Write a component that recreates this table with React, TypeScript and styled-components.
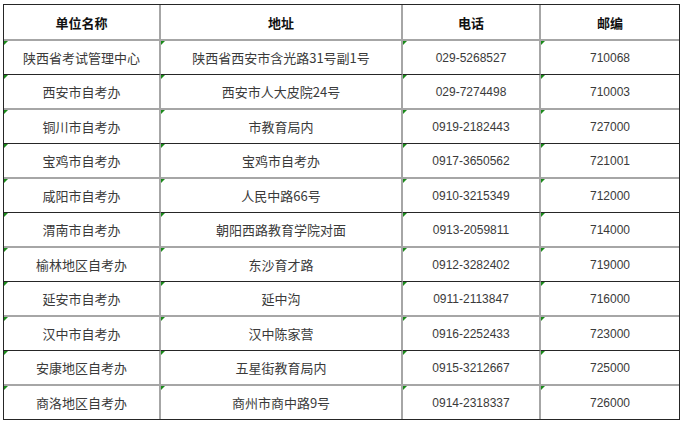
import React from "react";
import styled, { createGlobalStyle } from "styled-components";

interface Office {
  readonly name: string;
  readonly address: string;
  readonly phone: string;
  readonly zip: string;
}

const offices: Office[] = [
  { name: "陕西省考试管理中心", address: "陕西省西安市含光路31号副1号", phone: "029-5268527", zip: "710068" },
  { name: "西安市自考办", address: "西安市人大皮院24号", phone: "029-7274498", zip: "710003" },
  { name: "铜川市自考办", address: "市教育局内", phone: "0919-2182443", zip: "727000" },
  { name: "宝鸡市自考办", address: "宝鸡市自考办", phone: "0917-3650562", zip: "721001" },
  { name: "咸阳市自考办", address: "人民中路66号", phone: "0910-3215349", zip: "712000" },
  { name: "渭南市自考办", address: "朝阳西路教育学院对面", phone: "0913-2059811", zip: "714000" },
  { name: "榆林地区自考办", address: "东沙育才路", phone: "0912-3282402", zip: "719000" },
  { name: "延安市自考办", address: "延中沟", phone: "0911-2113847", zip: "716000" },
  { name: "汉中市自考办", address: "汉中陈家营", phone: "0916-2252433", zip: "723000" },
  { name: "安康地区自考办", address: "五星街教育局内", phone: "0915-3212667", zip: "725000" },
  { name: "商洛地区自考办", address: "商州市商中路9号", phone: "0914-2318337", zip: "726000" },
];

const GlobalStyle = createGlobalStyle`
  html, body {
    margin: 0;
    padding: 0;
    background: #fff;
  }
  body {
    font-family: "Noto Sans CJK SC", "Liberation Sans", sans-serif;
  }
`;

const Page = styled.div`
  padding: 4px 0 0 3px;
`;

const Table = styled.table`
  border-collapse: separate;
  border-spacing: 0;
  border: 1px solid #262626;
  table-layout: fixed;
`;

const HeadCell = styled.th<{ $w: number }>`
  width: ${(p) => p.$w}px;
  height: 34px;
  padding: 0;
  border-bottom: 2px solid #a6a6a6;
  border-right: 2px solid #a6a6a6;
  font-family: "Noto Sans CJK SC", sans-serif;
  font-size: 13px;
  font-weight: 700;
  color: #111;
  text-align: center;
  vertical-align: middle;

  &:last-child {
    border-right: none;
  }
`;

const Row = styled.tr<{ $dark: boolean; $last: boolean }>`
  td {
    height: 33px;
    border-bottom: ${(p) =>
      p.$last ? "none" : p.$dark ? "1px solid #262626" : "2px solid #a6a6a6"};
  }
`;

const Cell = styled.td<{ $num?: boolean }>`
  position: relative;
  padding: 0;
  border-right: 2px solid #a6a6a6;
  font-family: ${(p) =>
    p.$num
      ? '"Liberation Sans", "Noto Sans CJK SC", sans-serif'
      : '"Noto Sans CJK SC", sans-serif'};
  font-size: ${(p) => (p.$num ? 12 : 13)}px;
  color: #3a3a3a;
  text-align: center;
  vertical-align: middle;
  white-space: nowrap;

  &:last-child {
    border-right: none;
  }

  &::before {
    content: "";
    position: absolute;
    left: 0;
    top: 0;
    border-top: 4px solid #1a8a1a;
    border-right: 4px solid transparent;
  }
`;

export default function App() {
  return (
    <Page>
      <GlobalStyle />
      <Table>
        <thead>
          <tr>
            <HeadCell $w={155}>单位名称</HeadCell>
            <HeadCell $w={240}>地址</HeadCell>
            <HeadCell $w={136}>电话</HeadCell>
            <HeadCell $w={138}>邮编</HeadCell>
          </tr>
        </thead>
        <tbody>
          {offices.map((o, i) => (
            <Row key={o.name} $dark={i % 2 === 0} $last={i === offices.length - 1}>
              <Cell>{o.name}</Cell>
              <Cell>{o.address}</Cell>
              <Cell $num>{o.phone}</Cell>
              <Cell $num>{o.zip}</Cell>
            </Row>
          ))}
        </tbody>
      </Table>
    </Page>
  );
}
